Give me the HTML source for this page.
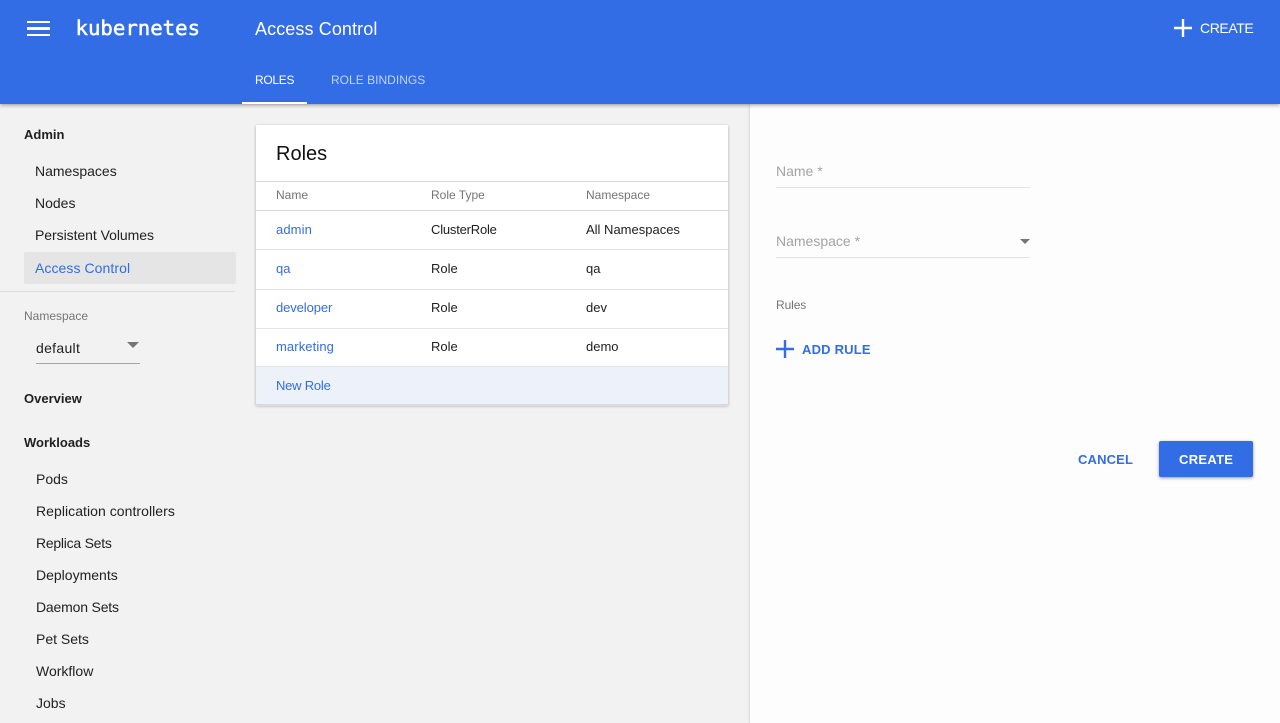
<!DOCTYPE html>
<html><head><meta charset="utf-8"><style>
html,body{margin:0;padding:0;width:1280px;height:723px;overflow:hidden;background:#f2f2f2;font-family:"Liberation Sans",sans-serif}
.t{position:absolute;white-space:nowrap;font-size:14px;line-height:20px;color:#212121}
.b{color:#326de6}.g{color:#757575;font-size:12px}.m{font-weight:bold;font-size:13px;color:#212121}
.a{position:absolute}
.line{position:absolute;left:256px;width:472px;height:1px;background:#e3e3e3}
</style></head><body>
<div class="a" style="left:749px;top:104px;width:531px;height:619px;background:#fdfdfd;border-left:1px solid #e0e0e0;box-shadow:-1px 0 1px rgba(0,0,0,.04)"></div>
<div class="a" style="left:0;top:0;width:1280px;height:104px;background:#326de6;box-shadow:0 1px 4px rgba(0,0,0,.4)"></div>
<div class="a" style="left:27px;top:21px;width:23px;height:2px;background:#fff"></div>
<div class="a" style="left:27px;top:27px;width:23px;height:3px;background:#fff"></div>
<div class="a" style="left:27px;top:34px;width:23px;height:2px;background:#fff"></div>
<div class="t" style="left:75.5px;top:16px;font:20.7px/24px 'DejaVu Sans Mono',monospace;color:#fff;-webkit-text-stroke:.5px #fff">kubernetes</div>
<div class="t" style="left:255px;top:19px;font-size:18px;color:#fff;letter-spacing:.1px">Access Control</div>
<div class="t" style="left:255px;top:70px;font-size:12px;color:#fff;letter-spacing:-.3px">ROLES</div>
<div class="t" style="left:331px;top:70px;font-size:12px;color:#c1d3f8;letter-spacing:.02px">ROLE BINDINGS</div>
<div class="a" style="left:242px;top:102px;width:65px;height:2px;background:#fff"></div>
<svg class="a" style="left:1174px;top:19px" width="18" height="18"><path d="M0 9H18M9 0V18" stroke="#fff" stroke-width="2.4"/></svg>
<div class="t" style="left:1200px;top:18px;color:#fff;letter-spacing:-.4px">CREATE</div>

<div class="t m" style="left:24px;top:125px">Admin</div>
<div class="t" style="left:35px;top:161px">Namespaces</div>
<div class="t" style="left:35px;top:193px">Nodes</div>
<div class="t" style="left:35px;top:225px;letter-spacing:-.05px">Persistent Volumes</div>
<div class="a" style="left:24px;top:252px;width:212px;height:32px;background:#e5e5e5;border-radius:2px"></div>
<div class="t b" style="left:35px;top:258px;letter-spacing:.07px">Access Control</div>
<div class="a" style="left:0;top:291px;width:235px;height:1px;background:#dcdcdc"></div>
<div class="t g" style="left:24px;top:306px">Namespace</div>
<div class="t" style="left:36px;top:338px;letter-spacing:.3px">default</div>
<svg class="a" style="left:127px;top:342px" width="12" height="6"><path d="M0 0H12L6 6Z" fill="#757575"/></svg>
<div class="a" style="left:36px;top:363px;width:104px;height:1px;background:#a6a6a6"></div>
<div class="t m" style="left:24px;top:389px">Overview</div>
<div class="t m" style="left:24px;top:433px">Workloads</div>
<div class="t" style="left:36px;top:469px">Pods</div>
<div class="t" style="left:36px;top:501px;letter-spacing:.05px">Replication controllers</div>
<div class="t" style="left:36px;top:533px;letter-spacing:-.25px">Replica Sets</div>
<div class="t" style="left:36px;top:565px">Deployments</div>
<div class="t" style="left:36px;top:597px;letter-spacing:-.18px">Daemon Sets</div>
<div class="t" style="left:36px;top:629px">Pet Sets</div>
<div class="t" style="left:36px;top:661px">Workflow</div>
<div class="t" style="left:36px;top:693px">Jobs</div>

<div class="a" style="left:256px;top:125px;width:472px;height:280px;background:#fff;box-shadow:0 1px 3px rgba(0,0,0,.3)"></div>
<div class="t" style="left:276px;top:142px;font-size:20px;line-height:24px;color:#111">Roles</div>
<div class="a" style="left:256px;top:181px;width:472px;height:1px;background:#d6d6d6"></div>
<div class="a" style="left:256px;top:210px;width:472px;height:1px;background:#d6d6d6"></div>
<div class="t g" style="left:276px;top:185px">Name</div>
<div class="t g" style="left:431px;top:185px">Role Type</div>
<div class="t g" style="left:586px;top:185px">Namespace</div>
<div class="t b" style="left:276px;top:220px;font-size:13px;letter-spacing:.1px">admin</div>
<div class="t" style="left:431px;top:220px;font-size:13px;letter-spacing:-.2px">ClusterRole</div>
<div class="t" style="left:586px;top:220px;font-size:13px">All Namespaces</div>
<div class="line" style="top:249px"></div>
<div class="t b" style="left:276px;top:259px;font-size:13px">qa</div>
<div class="t" style="left:431px;top:259px;font-size:13px">Role</div>
<div class="t" style="left:586px;top:259px;font-size:13px">qa</div>
<div class="line" style="top:289px"></div>
<div class="t b" style="left:276px;top:298px;font-size:13px;letter-spacing:-.1px">developer</div>
<div class="t" style="left:431px;top:298px;font-size:13px">Role</div>
<div class="t" style="left:586px;top:298px;font-size:13px">dev</div>
<div class="line" style="top:328px"></div>
<div class="t b" style="left:276px;top:337px;font-size:13px;letter-spacing:.1px">marketing</div>
<div class="t" style="left:431px;top:337px;font-size:13px">Role</div>
<div class="t" style="left:586px;top:337px;font-size:13px">demo</div>
<div class="line" style="top:366px"></div>
<div class="a" style="left:256px;top:367px;width:472px;height:37px;background:#edf1fa;border-bottom:2px solid #d9dbdf;box-sizing:content-box"></div>
<div class="t b" style="left:276px;top:376px;font-size:13px;letter-spacing:-.22px">New Role</div>

<div class="t" style="left:776px;top:161px;color:#a3a3a3">Name *</div>
<div class="a" style="left:776px;top:187px;width:254px;height:1px;background:#e2e2e2"></div>
<div class="t" style="left:776px;top:231px;color:#a3a3a3">Namespace *</div>
<svg class="a" style="left:1020px;top:239px" width="10" height="5"><path d="M0 0H10L5 5Z" fill="#757575"/></svg>
<div class="a" style="left:776px;top:257px;width:254px;height:1px;background:#e2e2e2"></div>
<div class="t g" style="left:776px;top:295px;letter-spacing:-.1px">Rules</div>
<svg class="a" style="left:776px;top:340px" width="18" height="18"><path d="M0 9H18M9 0V18" stroke="#326de6" stroke-width="2.4"/></svg>
<div class="t b" style="left:802px;top:340px;font-weight:bold;font-size:13px;letter-spacing:.2px">ADD RULE</div>
<div class="t b" style="left:1078px;top:450px;font-weight:bold;font-size:13px;letter-spacing:.15px">CANCEL</div>
<div class="a" style="left:1159px;top:441px;width:94px;height:36px;background:#326de6;border-radius:2px;box-shadow:0 1px 3px rgba(0,0,0,.4)"></div>
<div class="t" style="left:1179px;top:450px;font-weight:bold;font-size:13px;letter-spacing:.3px;color:#fff">CREATE</div>
</body></html>
